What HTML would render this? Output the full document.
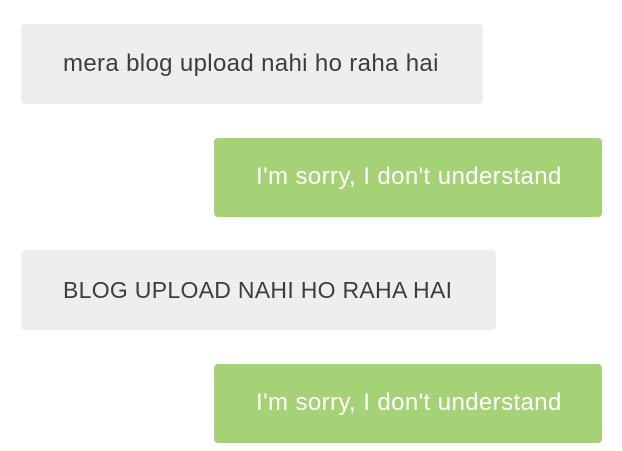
<!DOCTYPE html>
<html><head><meta charset="utf-8"><style>
html,body{margin:0;padding:0;background:#fff;width:622px;height:451px;overflow:hidden}
.b{position:absolute;border-radius:4px;font-family:"Liberation Sans",sans-serif;font-size:24px;white-space:nowrap}
.g{background:#eeeeee;color:#3a3d42}
.r{background:#a6d277;color:#fff}
.t{position:absolute;line-height:1}
</style></head><body>
<div class="b g" style="left:21px;top:24px;width:462px;height:80px"><span class="t" style="left:42px;top:28px;letter-spacing:0.35px">mera blog upload nahi ho raha hai</span></div>
<div class="b r" style="left:214px;top:138px;width:388px;height:79px"><span class="t" style="left:42px;top:27px;letter-spacing:0.4px">I'm sorry, I don't understand</span></div>
<div class="b g" style="left:21px;top:250px;width:475px;height:80px"><span class="t" style="left:42px;top:29px;font-size:23px;letter-spacing:0.3px">BLOG UPLOAD NAHI HO RAHA HAI</span></div>
<div class="b r" style="left:214px;top:364px;width:388px;height:79px"><span class="t" style="left:42px;top:27px;letter-spacing:0.4px">I'm sorry, I don't understand</span></div>
</body></html>
